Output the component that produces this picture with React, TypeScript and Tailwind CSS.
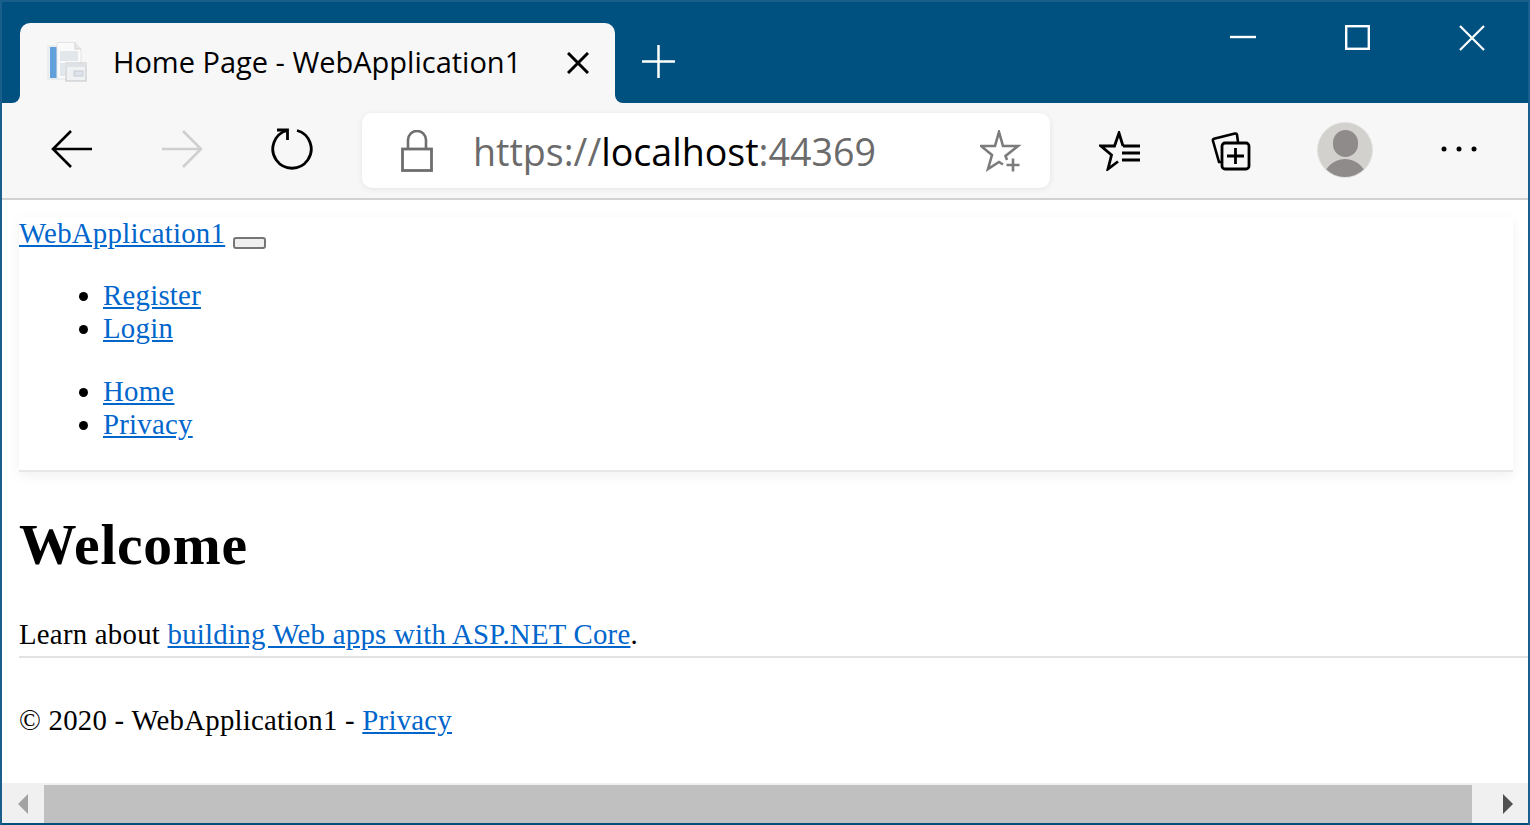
import React from "react";

const BLUE = "bg-[#005080]";

function Favicon() {
  return (
    <svg width="42" height="42" viewBox="0 0 42 42" fill="none">
      <rect x="1" y="4" width="10" height="33" fill="#f0f3f6" stroke="#e0e4e8" />
      <rect x="3" y="5" width="7" height="31" fill="#62a0dc" />
      <path d="M10 0.5H28L34 7V37H10Z" fill="#fafafa" stroke="#e4e4e4" />
      <path d="M28 0.5V7H34" fill="#e8e8e8" stroke="#d4d4d4" />
      <rect x="13" y="9" width="18" height="10" fill="#e2e7ec" />
      <rect x="13" y="21" width="5" height="13" fill="#e2e7ec" />
      <rect x="19" y="21" width="20" height="18" fill="#f0f1f2" stroke="#bfc3c7" />
      <rect x="19" y="21" width="20" height="4" fill="#dfe2e5" />
      <rect x="27" y="29" width="9" height="5" fill="#dde3ea" stroke="#c6ccd2" />
    </svg>
  );
}

function Glyph({ w, h, children, className = "" }: { w: number; h: number; children: React.ReactNode; className?: string }) {
  return (
    <svg width={w} height={h} viewBox={`0 0 ${w} ${h}`} fill="none" className={className}>
      {children}
    </svg>
  );
}

function ToolButton({ children, w = "w-[110px]" }: { children: React.ReactNode; w?: string }) {
  return <div className={`${w} h-full flex items-center justify-center shrink-0`}>{children}</div>;
}

export default function App() {
  const serif = { fontFamily: '"Liberation Serif", "Times New Roman", serif' };
  const link = "text-[#0066cc] underline";
  return (
    <div className="w-[1530px] h-[825px] overflow-hidden flex flex-col bg-white border-x-2 border-[#1a5f8c]">
      {/* Title bar */}
      <div className="h-[103px] shrink-0 flex bg-[#f7f7f7] relative">
        <div className={`w-[18px] shrink-0 ${BLUE} rounded-br-lg`} />
        <div className={`w-[595px] shrink-0 ${BLUE} flex items-end`}>
          <div
            className="w-full h-[80px] bg-[#f7f7f7] rounded-t-[10px] flex items-center text-black"
            style={{ fontFamily: '"Open Sans", "Noto Sans", sans-serif' }}
          >
            <div className="ml-[27px] w-[42px] h-[42px] shrink-0">
              <Favicon />
            </div>
            <div className="ml-[24px] w-[454px] shrink-0 text-[29px] leading-[40px] pb-[2px] whitespace-nowrap">
              Home Page - WebApplication1
            </div>
            <Glyph w={22} h={22}>
              <path d="M1 1L21 21M21 1L1 21" stroke="#000" strokeWidth="3" />
            </Glyph>
          </div>
        </div>
        <div className={`flex-1 ${BLUE} rounded-bl-lg flex border-t-2 border-[#1a5f8c]`}>
          <div className="ml-[27px] mt-[43px] h-[32px]">
            <Glyph w={33} h={33}>
              <path d="M16.5 0V33M0 16.5H33" stroke="#fff" strokeWidth="2.5" />
            </Glyph>
          </div>
          <div className="ml-auto flex h-[70px]">
            <div className="w-[115px] flex justify-center pt-[33px]">
              <Glyph w={26} h={4}>
                <path d="M0 2H26" stroke="#fff" strokeWidth="2.4" />
              </Glyph>
            </div>
            <div className="w-[115px] flex justify-center pt-[23px]">
              <Glyph w={25} h={25}>
                <rect x="1.2" y="1.2" width="22.6" height="22.6" stroke="#fff" strokeWidth="2.4" />
              </Glyph>
            </div>
            <div className="w-[113px] flex justify-center pt-[23px]">
              <Glyph w={26} h={26}>
                <path d="M1 1L25 25M25 1L1 25" stroke="#fff" strokeWidth="2.2" />
              </Glyph>
            </div>
          </div>
        </div>
        <div className="absolute top-0 left-0 right-0 h-[2px] bg-[#1a5f8c]" />
      </div>

      {/* Toolbar */}
      <div className="h-[97px] shrink-0 bg-[#f7f7f7] border-b-2 border-[#d2d2d2] flex items-center pl-[15px]">
        <ToolButton w="w-[110px] pb-[3px]">
          <Glyph w={42} h={38}>
            <path d="M41 19H2M20 1L2 19L20 37" stroke="#000" strokeWidth="2.6" />
          </Glyph>
        </ToolButton>
        <ToolButton w="w-[110px] pb-[3px]">
          <Glyph w={42} h={38}>
            <path d="M1 19H40M22 1L40 19L22 37" stroke="#cfcfcf" strokeWidth="2.6" />
          </Glyph>
        </ToolButton>
        <ToolButton w="w-[110px] pb-[2px]">
          <Glyph w={42} h={44}>
            <path d="M16 2.5A19.2 19.2 0 1 0 26 2.5" stroke="#000" strokeWidth="2.8" />
            <path d="M6 2H16.5V12" stroke="#000" strokeWidth="2.8" />
          </Glyph>
        </ToolButton>
        <div className="w-[688px] h-[75px] ml-[15px] bg-white rounded-[10px] shadow-[0_1px_6px_rgba(0,0,0,0.08)] flex items-center shrink-0">
          <div className="ml-[39px] w-[32px]">
            <Glyph w={32} h={42}>
              <path d="M7 19V10A9 9 0 0 1 25 10V19" stroke="#6e6e6e" strokeWidth="2.6" />
              <rect x="1.5" y="19" width="29" height="21.5" stroke="#6e6e6e" strokeWidth="2.8" />
            </Glyph>
          </div>
          <div
            className="ml-[40px] w-[490px] text-[37.6px] leading-[54px] pt-[2px] whitespace-nowrap text-[#6b6b6b]"
            style={{ fontFamily: '"Open Sans", "Noto Sans", sans-serif' }}
          >
            https://<span className="text-black">localhost</span>:44369
          </div>
          <Glyph w={42} h={42} className="ml-[17px]">
            <path d="M27 30L25.5 26L38 16H23L19 2L15 16H1L12 25L8 39L19 32L23 34.5" stroke="#7c7c7c" strokeWidth="2.6" />
            <path d="M33 28.5V41.5M26.5 35H39.5" stroke="#7c7c7c" strokeWidth="2.6" />
          </Glyph>
        </div>
        <ToolButton w="w-[70px] ml-[35px]">
          <Glyph w={42} h={40}>
            <path d="M24 15L20 2L15.5 15H2L12.5 24L9 38L19 30.5" stroke="#000" strokeWidth="2.8" />
            <path d="M24 15H41M23 22H41M23 29H41" stroke="#000" strokeWidth="2.8" />
          </Glyph>
        </ToolButton>
        <ToolButton w="w-[70px] ml-[41px]">
          <Glyph w={40} h={40}>
            <path d="M10 31H8L2 10C1.7 9 2 8 3 7.7L24 2.5C25 2.3 25.8 2.8 26 3.8L27 11" stroke="#000" strokeWidth="2.6" />
            <rect x="11" y="12" width="27" height="26" rx="3" stroke="#000" strokeWidth="2.8" />
            <path d="M24.5 17V33M16 25H33" stroke="#000" strokeWidth="2.8" />
          </Glyph>
        </ToolButton>
        <div className="w-[56px] h-[56px] ml-[51px] mb-[2px] rounded-full bg-[#d2d1ce] border border-[#e2e2e0] overflow-hidden shrink-0 flex flex-col items-center">
          <div className="w-[25px] h-[27px] mt-[7px] rounded-full bg-[#8e8b8a] shrink-0" />
          <div className="w-[44px] h-[44px] mt-[2px] rounded-full bg-[#8e8b8a] shrink-0" />
        </div>
        <ToolButton w="w-[60px] ml-[56px] pb-[3px]">
          <Glyph w={36} h={6}>
            <circle cx="3" cy="3" r="2.5" fill="#000" />
            <circle cx="18" cy="3" r="2.5" fill="#000" />
            <circle cx="33" cy="3" r="2.5" fill="#000" />
          </Glyph>
        </ToolButton>
      </div>

      {/* Page */}
      <div className="flex-1 min-h-0 overflow-hidden bg-white pt-[17px] pl-[17px] text-black text-[28.8px] leading-[33px] tracking-[0.25px]" style={serif}>
        <nav className="w-[1494px] h-[255px] border-b-2 border-[#e7e7e7] bg-white shadow-[0_4px_12px_rgba(0,0,0,0.06)]">
          <div className="flex items-start h-[33px]">
            <a className={link}>WebApplication1</a>
            <button className="ml-[8px] mt-[20px] w-[33px] h-[12px] bg-[#efefef] border-2 border-[#767676] rounded-[3px]" />
          </div>
          <ul className="list-disc mt-[29px] pl-[84px]">
            <li><a className={link}>Register</a></li>
            <li><a className={link}>Login</a></li>
          </ul>
          <ul className="list-disc mt-[30px] pl-[84px]">
            <li><a className={link}>Home</a></li>
            <li><a className={link}>Privacy</a></li>
          </ul>
        </nav>
        <h1 className="mt-[40px] text-[57.6px] leading-[66px] font-bold tracking-[0.7px]">Welcome</h1>
        <p className="mt-[40px]">
          Learn about <a className={link}>building Web apps with ASP.NET Core</a>.
        </p>
        <div className="mt-[5px] h-[2px] bg-[#e2e2e2]" />
        <p className="mt-[46px]">
          © 2020 - WebApplication1 - <a className={link}>Privacy</a>
        </p>
      </div>

      {/* Horizontal scrollbar */}
      <div className="h-[40px] shrink-0 bg-[#f0f0f0] flex items-center pt-[2px]">
        <div className="w-[42px] flex justify-center">
          <Glyph w={12} h={20}>
            <path d="M11 0V20L1 10Z" fill="#a3a3a3" />
          </Glyph>
        </div>
        <div className="flex-1 h-full bg-[#c0c0c0]" />
        <div className="w-[56px] flex justify-center">
          <Glyph w={12} h={20} className="ml-[16px]">
            <path d="M1 0V20L11 10Z" fill="#505050" />
          </Glyph>
        </div>
      </div>
      <div className="h-[2px] shrink-0 bg-[#00507f]" />
    </div>
  );
}
